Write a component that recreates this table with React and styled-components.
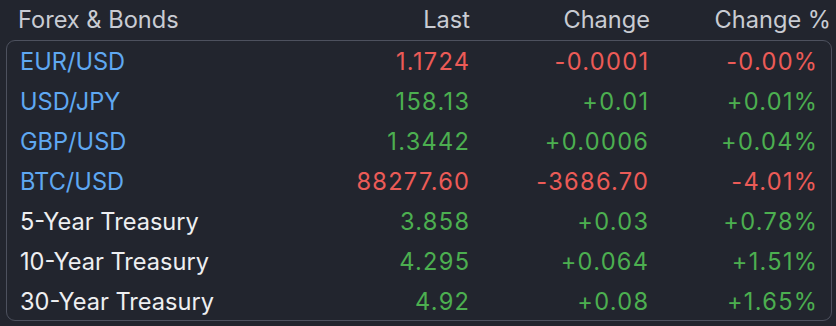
import React from "react";
import styled, { createGlobalStyle } from "styled-components";

const Global = createGlobalStyle`
  html, body { margin: 0; padding: 0; background: #22252e; }
  body { font-family: Inter, "Noto Sans", sans-serif; -webkit-font-smoothing: antialiased; }
`;

const Page = styled.div`
  width: 836px;
  height: 326px;
  box-sizing: border-box;
  padding: 0 4px 0 6px;
  background: #22252e;
`;

const Header = styled.div`
  display: grid;
  grid-template-columns: 1fr 180px 180px 181px;
  align-items: center;
  height: 40px;
  padding: 0 1px 2px 12px;
  box-sizing: border-box;
  color: #c9ccd3;
  font-size: 23.6px;
  font-weight: 400;
`;

const HeadCell = styled.div`
  text-align: ${(p) => (p.$left ? "left" : "right")};
  white-space: nowrap;
`;

const Box = styled.div`
  border: 1px solid #4d515e;
  border-radius: 9px;
  height: 281px;
  box-sizing: border-box;
`;

const Row = styled.div`
  display: grid;
  grid-template-columns: 1fr 180px 179px 169px;
  align-items: center;
  height: 40px;
  padding: 0 14px 0 13px;
  font-size: 23.6px;
`;

const Name = styled.div`
  color: ${(p) => (p.$pair ? "#5fa8f2" : "#eeeff1")};
  white-space: nowrap;
`;

const Num = styled.div`
  text-align: right;
  color: ${(p) => (p.$up ? "#4caf50" : "#ec5b57")};
  white-space: nowrap;
  letter-spacing: 1.3px;
  margin-right: -1.3px;
`;

const rows = [
  ["EUR/USD", "1.1724", "-0.0001", "-0.00%", false, true],
  ["USD/JPY", "158.13", "+0.01", "+0.01%", true, true],
  ["GBP/USD", "1.3442", "+0.0006", "+0.04%", true, true],
  ["BTC/USD", "88277.60", "-3686.70", "-4.01%", false, true],
  ["5-Year Treasury", "3.858", "+0.03", "+0.78%", true, false],
  ["10-Year Treasury", "4.295", "+0.064", "+1.51%", true, false],
  ["30-Year Treasury", "4.92", "+0.08", "+1.65%", true, false],
];

export default function App() {
  return (
    <Page>
      <Global />
      <Header>
        <HeadCell $left>Forex &amp; Bonds</HeadCell>
        <HeadCell>Last</HeadCell>
        <HeadCell>Change</HeadCell>
        <HeadCell>Change %</HeadCell>
      </Header>
      <Box>
        {rows.map(([n, l, c, p, up, pair]) => (
          <Row key={n}>
            <Name $pair={pair}>{n}</Name>
            <Num $up={up}>{l}</Num>
            <Num $up={up}>{c}</Num>
            <Num $up={up}>{p}</Num>
          </Row>
        ))}
      </Box>
    </Page>
  );
}
